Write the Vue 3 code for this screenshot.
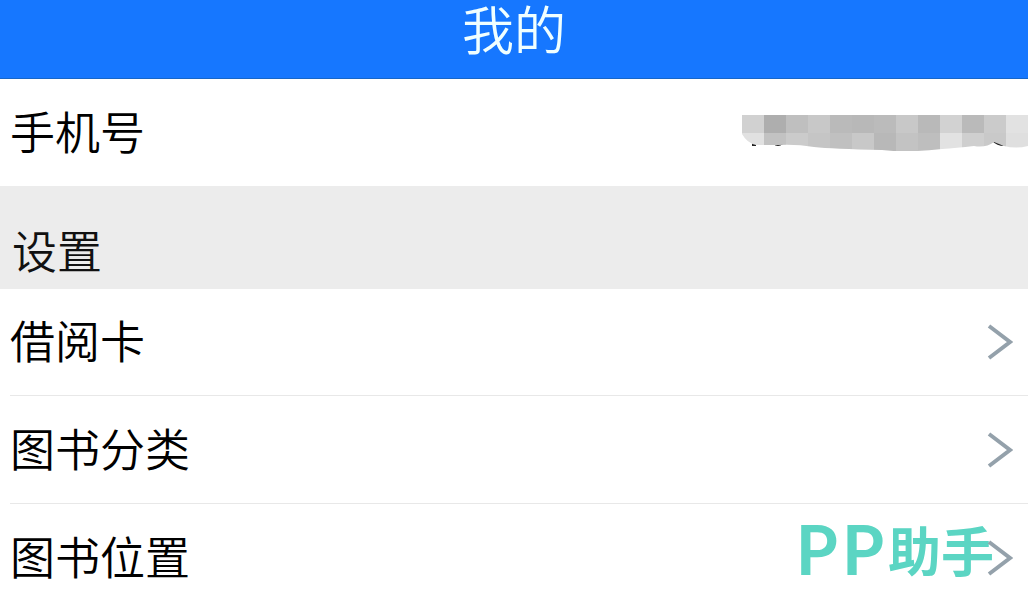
<script setup>
const links = ['借阅卡', '图书分类', '图书位置']
const top = ['#d1d1d1', '#aeaeae', '#bfbfbf', '#c8c8c8', '#bababa', '#b8b8b8', '#bbbbbb', '#c8c8c8', '#b9b9b9', '#d2d2d2', '#bababa', '#cbcbcb', '#e2e2e2']
const bottom = ['#e1e1e1', '#c2c2c2', '#cbcbcb', '#c5c5c5', '#c0c0c0', '#c8c8c8', '#b8b8b8', '#c3c3c3', '#bebebe', '#e2e2e2', '#cfcfcf', '#c9c9c9', '#dfdfdf']
</script>

<template>
  <div class="page">
    <header class="bar"><h1>我的</h1></header>
    <main>
      <div class="row phone">
        <span class="label">手机号</span>
        <svg class="mask" width="286" height="36" viewBox="0 0 286 36" aria-hidden="true">
          <defs>
            <clipPath id="blob">
              <path d="M0 0H286V31Q274 34 262 31Q257 29 252 27Q244 33 232 31Q214 33 200 34Q164 38 140 35Q90 34 72 32Q54 29 36 30H14Q5 28 0 19Z" />
            </clipPath>
          </defs>
          <path d="M10 28h4v3h-4zM31 29q5 4 10 0zM70 29q5 3 8 1zM250 26q5 5 12 5l-5-3-5-3z" fill="#222" />
          <g clip-path="url(#blob)" shape-rendering="crispEdges">
            <rect v-for="(c, i) in top" :key="'t' + i" :x="i * 22" y="0" width="22" height="18" :fill="c" />
            <rect v-for="(c, i) in bottom" :key="'b' + i" :x="i * 22" y="18" width="22" height="18" :fill="c" />
          </g>
        </svg>
      </div>
      <h2 class="section">设置</h2>
      <nav>
        <a v-for="name in links" :key="name" class="row link" href="#">
          <span class="label">{{ name }}</span>
          <svg class="arrow" width="26" height="36" viewBox="0 0 26 36" aria-hidden="true">
            <path d="M2 2L23 18L2 34" fill="none" stroke="#94a1ab" stroke-width="4" />
          </svg>
        </a>
      </nav>
    </main>
    <div class="watermark">
      <span class="latin">P</span><span class="latin">P</span><span>助手</span>
    </div>
  </div>
</template>

<style>
body {
  margin: 0;
}
</style>

<style scoped>
.page {
  position: relative;
  height: 100vh;
  overflow: hidden;
  background: #fff;
  color: #000;
  font-family: "Liberation Sans", "Noto Sans CJK SC", sans-serif;
  font-size: 45px;
  font-weight: 350;
  line-height: 64px;
}
.bar {
  box-sizing: border-box;
  height: 79px;
  background: #1677ff;
  border-bottom: 1px solid #1766c8;
  color: #f0ffff;
  text-align: center;
}
h1 {
  margin: 0;
  font-size: 52px;
  font-weight: 350;
  line-height: 64px;
}
.row {
  box-sizing: border-box;
  display: flex;
  align-items: center;
  justify-content: space-between;
  height: 107px;
  padding-left: 10px;
}
.label {
  padding-top: 4px;
}
.mask {
  display: block;
}
.section {
  box-sizing: border-box;
  height: 103px;
  margin: 0;
  padding: 36px 12px 0;
  background: #ececec;
  color: #111;
  font-size: 45px;
  font-weight: 350;
  line-height: 64px;
}
.link {
  margin-left: 10px;
  padding: 0 15px 0 0;
  border-bottom: 1px solid #e8e8e8;
  color: inherit;
  text-decoration: none;
}
.link + .link {
  height: 108px;
}
.arrow {
  position: relative;
  z-index: 2;
}
.watermark {
  position: absolute;
  right: 34px;
  bottom: 18px;
  display: flex;
  align-items: center;
  color: #5bd5c3;
  font-family: "Noto Sans CJK SC", sans-serif;
  font-size: 53px;
  font-weight: 700;
  pointer-events: none;
}
.latin {
  margin-right: 4px;
  font-family: Lato, sans-serif;
  font-size: 68px;
}
</style>
